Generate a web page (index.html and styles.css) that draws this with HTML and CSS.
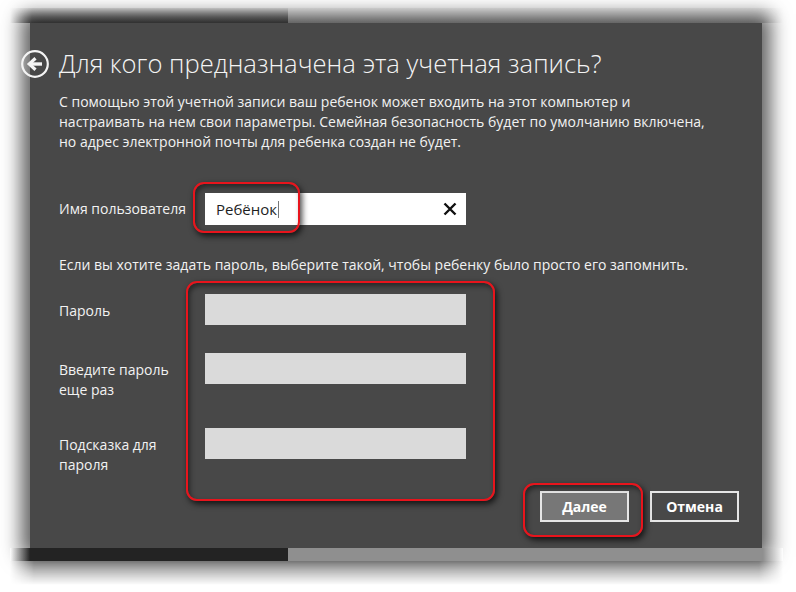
FILE: index.html
```html
<!DOCTYPE html>
<html lang="ru">
<head>
    <meta charset="UTF-8">
    <meta name="viewport" content="width=device-width, initial-scale=1.0">
    <title>Для кого предназначена эта учетная запись?</title>
    <link rel="stylesheet" href="styles.css">
</head>
<body>
    <div class="shot">
        <div class="band band-top">
            <span class="band-left"></span>
            <span class="band-right"></span>
        </div>
        <div class="dialog">
            <div class="title-row">
                <svg class="back" width="30" height="30" viewBox="0 0 30 30">
                    <circle cx="15" cy="15" r="12.8" fill="none" stroke="#f4f4f4" stroke-width="2.2"/>
                    <path d="M22 15H11" stroke="#f4f4f4" stroke-width="3.4" fill="none"/>
                    <path d="M15.5 9.2L9.2 15L15.5 20.8" stroke="#f4f4f4" stroke-width="3.2" fill="none"/>
                </svg>
                <h1>Для кого предназначена эта учетная запись?</h1>
            </div>
            <p class="intro">С помощью этой учетной записи ваш ребенок может входить на этот компьютер и<br>настраивать на нем свои параметры. Семейная безопасность будет по умолчанию включена,<br>но адрес электронной почты для ребенка создан не будет.</p>

            <div class="form-row">
                <label class="label label-mid">Имя пользователя</label>
                <div class="field field-white">
                    <span class="value">Ребёнок</span><span class="caret"></span>
                    <svg class="clear" width="14" height="14" viewBox="0 0 14 14">
                        <path d="M1.5 1.5L12.5 12.5M12.5 1.5L1.5 12.5" stroke="#111" stroke-width="2.4"/>
                    </svg>
                </div>
            </div>

            <p class="hint">Если вы хотите задать пароль, выберите такой, чтобы ребенку было просто его запомнить.</p>

            <div class="form-grid">
                <label class="label">Пароль</label>
                <div class="field"></div>
                <label class="label">Введите пароль<br>еще раз</label>
                <div class="field"></div>
                <label class="label">Подсказка для<br>пароля</label>
                <div class="field"></div>
            </div>

            <div class="buttons">
                <button class="btn btn-primary">Далее</button>
                <button class="btn">Отмена</button>
            </div>

            <!-- красные рамки поверх скриншота -->
            <span class="mark mark-user"></span>
            <span class="mark mark-pass"></span>
            <span class="mark mark-next"></span>
        </div>
        <div class="band band-bottom">
            <span class="band-left"></span>
            <span class="band-right"></span>
        </div>
        <div class="floor"></div>
    </div>
</body>
</html>
```

FILE: styles.css
```css
body {
    margin: 0;
    padding: 0;
    background-color: #fff;
    font-family: "Open Sans", "Noto Sans", sans-serif;
    color: #f2f2f2;
}
.shot {
    width: 773px;
    margin: 8px 0 0 10px;
    display: flex;
    flex-direction: column;
}
.band {
    display: flex;
}
.band-top {
    height: 15px;
}
.band-bottom {
    height: 13px;
    position: relative;
    z-index: 1;
}
.band-left {
    width: 278px;
}
.band-right {
    flex: 1;
}
.band-top .band-left {
    background: linear-gradient(to right, #fff, rgba(255,255,255,0) 22px),
                linear-gradient(#e6e6e6, #8e8e8e 60%, #646464);
}
.band-top .band-right {
    background: linear-gradient(to left, #fff, rgba(255,255,255,0) 22px),
                linear-gradient(#f2f2f2, #e2e2e2 60%, #d2d2d2);
}
.band-bottom .band-left {
    background: linear-gradient(to right, #fff, rgba(255,255,255,0) 20px),
                #232323;
}
.band-bottom .band-right {
    background: linear-gradient(to left, #fff, rgba(255,255,255,0) 20px),
                #8f8f8f;
}
.floor {
    height: 24px;
    background: linear-gradient(rgba(0,0,0,0.42), rgba(0,0,0,0));
    -webkit-mask-image: linear-gradient(to right, transparent, #000 24px, #000 calc(100% - 24px), transparent);
    mask-image: linear-gradient(to right, transparent, #000 24px, #000 calc(100% - 24px), transparent);
}
.dialog {
    position: relative;
    height: 525px;
    box-sizing: border-box;
    margin: 0 21px 0 20px;
    padding: 25px 23px 0 29px;
    background-color: #484848;
    box-shadow: 0 0 18px 9px rgba(0,0,0,0.62);
}
.title-row {
    display: flex;
    align-items: center;
    gap: 9px;
    margin-left: -39px;
    height: 31px;
}
.back {
    flex: none;
}
h1 {
    margin: 0;
    font-family: "Open Sans", "Noto Sans", sans-serif;
    font-weight: 300;
    font-size: 25.6px;
    line-height: 31px;
    color: #f4f4f4;
    white-space: nowrap;
}
.intro {
    margin: 13px 0 0;
    font-size: 14px;
    line-height: 20px;
    white-space: nowrap;
}
.form-row,
.form-grid {
    display: grid;
    grid-template-columns: 146px 261px;
}
.form-row {
    margin-top: 41px;
    align-items: center;
}
.form-grid {
    margin-top: 19px;
    row-gap: 28px;
    align-items: start;
}
.label {
    font-size: 14px;
    line-height: 20px;
    padding-top: 7px;
}
.label-mid {
    padding-top: 0;
}
.field {
    height: 31px;
    background-color: #dadada;
}
.field-white {
    height: 32px;
    background-color: #fff;
    display: flex;
    align-items: center;
    padding: 0 9px 0 11px;
    box-sizing: border-box;
}
.value {
    font-size: 15px;
    color: #1e1e1e;
}
.caret {
    width: 1px;
    height: 17px;
    margin-left: 1px;
    background-color: #777;
}
.clear {
    margin-left: auto;
}
.hint {
    margin: 30px 0 0;
    font-size: 14px;
    line-height: 20px;
    white-space: nowrap;
}
.buttons {
    display: flex;
    justify-content: flex-end;
    gap: 21px;
    margin-top: 16px;
}
.btn {
    width: 89px;
    height: 31px;
    border: 2px solid #e6e6e6;
    background-color: #484848;
    color: #fff;
    font-family: "Open Sans", "Noto Sans", sans-serif;
    font-weight: bold;
    font-size: 14px;
    padding: 0;
}
.btn-primary {
    background-color: #777;
}
.mark {
    position: absolute;
    border: 2.5px solid #e8141c;
    border-radius: 11px;
    box-shadow: 2px 3px 6px rgba(0,0,0,0.75), inset 2px 3px 5px rgba(0,0,0,0.45);
    box-sizing: border-box;
}
.mark-user {
    left: 163px;
    top: 159px;
    width: 107px;
    height: 51px;
}
.mark-pass {
    left: 156px;
    top: 258px;
    width: 309px;
    height: 220px;
}
.mark-next {
    left: 493px;
    top: 460px;
    width: 120px;
    height: 54px;
}
```
